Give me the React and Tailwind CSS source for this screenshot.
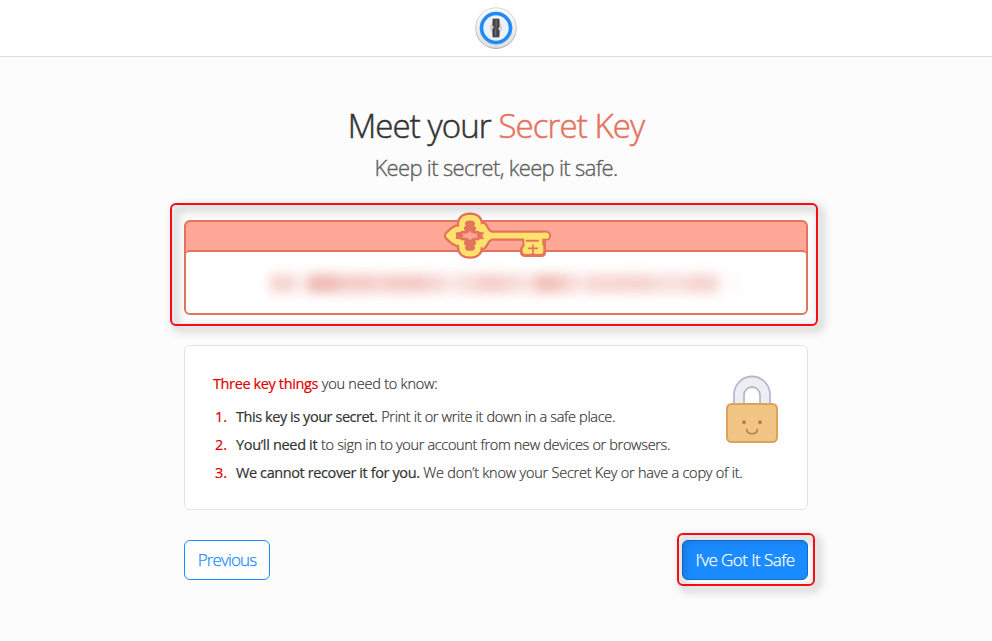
const blots = [
  [20, 24, 0.2], [44, 16, 0.07], [58, 30, 0.32], [88, 40, 0.24], [128, 8, 0.14], [134, 36, 0.24], [168, 24, 0.2],
  [192, 20, 0.12], [211, 16, 0.16], [227, 28, 0.23], [255, 19, 0.17], [274, 10, 0.12], [284, 28, 0.29], [312, 12, 0.19],
  [324, 14, 0.12], [338, 34, 0.19], [372, 30, 0.2], [402, 16, 0.15], [418, 20, 0.15], [438, 30, 0.2], [468, 24, 0.02],
];

function Logo() {
  return (
    <svg width="44" height="44" viewBox="0 0 44 44">
      <defs>
        <linearGradient id="rim" x1="0" y1="0" x2="0" y2="1">
          <stop offset="0" stopColor="#fdfdfd" />
          <stop offset="1" stopColor="#dedede" />
        </linearGradient>
      </defs>
      <circle cx="22" cy="22.3" r="20.6" fill="#a4a4a4" />
      <circle cx="22" cy="21.9" r="20.2" fill="url(#rim)" stroke="#cfcfcf" strokeWidth=".6" />
      <circle cx="22" cy="22" r="14.3" fill="#edf0f5" stroke="#1a8cff" strokeWidth="3.2" />
      <circle cx="22" cy="22" r="16.1" fill="none" stroke="#1676dc" strokeWidth=".6" />
      <circle cx="22" cy="22" r="6.2" fill="#d3d5d7" />
      <path d="M19 13.2h6v8l-1.6 1.6 1.6 1.6v6.4h-6v-8l1.6-1.6-1.6-1.6z" fill="#4c4c4c" stroke="#2b2b2b" strokeWidth=".9" />
      <path d="M22.2 14v7.6M21.6 22.5v7.6" stroke="#777" strokeWidth=".8" />
    </svg>
  );
}

function KeyShape() {
  return (
    <>
      <path d="M96 77Q94 53 120 53Q146 53 144 77" />
      <path d="M96 137Q94 161 120 161Q146 161 144 137" />
      <path d="M57 107L72 93L82 88M57 107L72 121L82 126M178 107L168 97L158 80M178 107L168 117L158 134" />
      <path d="M60 107H70M166 107H348" />
    </>
  );
}

function GoldKey() {
  return (
    <svg className="block" width="140" height="70" viewBox="0 0 420 210">
      <g fill="none" stroke="#e4735c" strokeWidth="31" strokeLinecap="round" strokeLinejoin="round">
        <KeyShape />
      </g>
      <path d="M277 110H341Q348 116 348 132V160Q346 171 335 171H284Q271 170 270 158V146Q272 140 277 136Z" fill="#e4735c" />
      <path d="M72 92L96 66H144L168 92V122L144 148H96L72 122Z" fill="#e4735c" />
      <g fill="none" stroke="#ffe26b" strokeWidth="17" strokeLinecap="round" strokeLinejoin="round">
        <KeyShape />
      </g>
      <g fill="#ffe26b">
        <circle cx="98" cy="82" r="11" /><circle cx="142" cy="82" r="11" />
        <circle cx="98" cy="132" r="11" /><circle cx="142" cy="132" r="11" />
        <circle cx="87" cy="90" r="7" /><circle cx="87" cy="124" r="7" />
        <circle cx="153" cy="90" r="7" /><circle cx="153" cy="124" r="7" />
        <circle cx="167" cy="107" r="13" />
        <path d="M184 98L166 88V126L184 116Z" />
        <path d="M340 98.500H349A8.500 8.500 0 0 1 349 115.500H340Z" />
        <path d="M282 113H337V133L340 139V154Q340 162 331 162H315L309 157L303 162H286Q278 162 278 154V145L284 138Z" />
      </g>
      <g fill="#e4735c">
        <circle cx="110" cy="85" r="8" /><circle cx="130" cy="85" r="8" />
        <circle cx="110" cy="129" r="8" /><circle cx="130" cy="129" r="8" />
      </g>
      <path d="M93 98Q107 102 115 97L120 91L125 97Q133 102 147 98L141 107L147 116Q133 112 125 117L120 123L115 117Q107 112 93 116L99 107Z" fill="#ffa797" stroke="#e4735c" strokeWidth="3" strokeLinejoin="round" />
      <path d="M80 99L86 107L80 115M160 99L154 107L160 115" fill="none" stroke="#e4735c" strokeWidth="4" strokeLinecap="round" />
      <path d="M290 122H324" stroke="#e4735c" strokeWidth="6" strokeLinecap="round" />
      <path d="M309 136V156M296 145H322" stroke="#e4735c" strokeWidth="5" strokeLinecap="round" />
    </svg>
  );
}

function Padlock() {
  return (
    <svg width="54" height="70" viewBox="0 0 54 70">
      <path d="M9 32V19.500a18 18 0 0 1 36 0V32H35V20a8 8 0 0 0-16 0V32z" fill="#eceef3" stroke="#b5bacd" strokeWidth="1.8" />
      <rect x="2" y="29" width="50" height="38" rx="4.500" fill="#f2c483" stroke="#daa45d" strokeWidth="2" />
      <circle cx="19" cy="47.2" r="2" fill="#aa8655" /><circle cx="35" cy="47.2" r="2" fill="#aa8655" />
      <path d="M21.600 54.600c1 5.600 9.800 5.600 10.800 0" fill="none" stroke="#aa8655" strokeWidth="1.7" strokeLinecap="round" />
    </svg>
  );
}

export default function App() {
  return (
    <div className="h-[641px] w-[992px] overflow-hidden bg-[#fcfcfc] font-['Open_Sans','Noto_Sans',sans-serif] text-[#333]">
      <header className="flex h-[57px] justify-center border-b border-[#dedede] bg-white pt-[6px]">
        <Logo />
      </header>
      <main className="mx-auto w-[624px]">
        <h1 className="mt-[47px] flex h-[44px] items-center justify-center whitespace-nowrap text-[33px] font-light tracking-[-0.9px] [-webkit-text-stroke:0.5px]">
          <span>Meet your <span className="text-[#e4735c]">Secret Key</span></span>
        </h1>
        <p className="mt-[4px] flex h-[30px] items-center justify-center whitespace-nowrap text-[22px] font-light tracking-[-0.67px] text-[#606060] [-webkit-text-stroke:0.35px]"><span>Keep it secret, keep it safe.</span></p>

        <section className="relative mt-[38px] h-[95px] rounded-md border-2 border-[#e4735c] bg-[#ffa797] pt-[28px]">
          <div className="h-[63px] rounded-[4px] border-t-2 border-[#e4735c] bg-white pl-[64px] pt-[22px]">
            <div className="relative h-[20px] blur-[6px]">
              {blots.map(([left, width, opacity]) => (
                <i key={left} className="absolute top-0 h-[19px] bg-[#d9422f]" style={{ left, width, opacity: opacity * 1.15 }} />
              ))}
            </div>
          </div>
          <div className="absolute left-[244px] top-[-22px]"><GoldKey /></div>
          <div className="absolute -left-[16px] -top-[19px] h-[123px] w-[648px] rounded-[6px] border-2 border-[#f50d14] drop-shadow-[4px_4px_4px_rgba(0,0,0,0.5)]" />
        </section>

        <section className="mt-[30px] flex h-[165px] justify-between rounded-md border border-[#e4e4e4] bg-white pl-[28px] pr-[28px] text-[14.5px] font-light [-webkit-text-stroke:0.2px]">
          <div className="whitespace-nowrap pt-[27px] leading-[22px]">
            <p><span className="font-normal tracking-[-0.38px] text-[#e00000]">Three key things</span> <span className="tracking-[-0.22px]">you need to know:</span></p>
            <ol className="pt-[8px] leading-[28px]">
              <li className="flex"><b className="w-[23px] pl-[2px] font-normal text-[#e00000]">1.</b><p><span className="font-normal tracking-[-0.44px]">This key is your secret.</span> <span className="tracking-[-0.33px]">Print it or write it down in a safe place.</span></p></li>
              <li className="flex"><b className="w-[23px] pl-[2px] font-normal text-[#e00000]">2.</b><p><span className="font-normal tracking-[-0.33px]">You’ll need it</span> <span className="tracking-[-0.34px]">to sign in to your account from new devices or browsers.</span></p></li>
              <li className="flex"><b className="w-[23px] pl-[2px] font-normal text-[#e00000]">3.</b><p><span className="font-normal tracking-[-0.4px]">We cannot recover it for you.</span> <span className="tracking-[-0.23px]">We don’t know your Secret Key or have a copy of it.</span></p></li>
            </ol>
          </div>
          <div className="-ml-20 pt-[29px]"><Padlock /></div>
        </section>

        <div className="mt-[30px] flex justify-between whitespace-nowrap text-[17px] font-light [-webkit-text-stroke:0.25px]">
          <button className="h-[40px] w-[86px] rounded-md border border-[#1a8cff] bg-white tracking-[-0.87px] text-[#1a8cff]">Previous</button>
          <div className="relative">
            <button className="h-[40px] w-[126px] rounded-md border border-[#136dca] bg-[#1a8cff] tracking-[-0.55px] text-white">I’ve Got It Safe</button>
            <div className="absolute -left-[5px] -top-[7px] h-[53px] w-[138px] rounded-[6px] border-2 border-[#f50d14] drop-shadow-[4px_4px_4px_rgba(0,0,0,0.5)]" />
          </div>
        </div>
      </main>
    </div>
  );
}
